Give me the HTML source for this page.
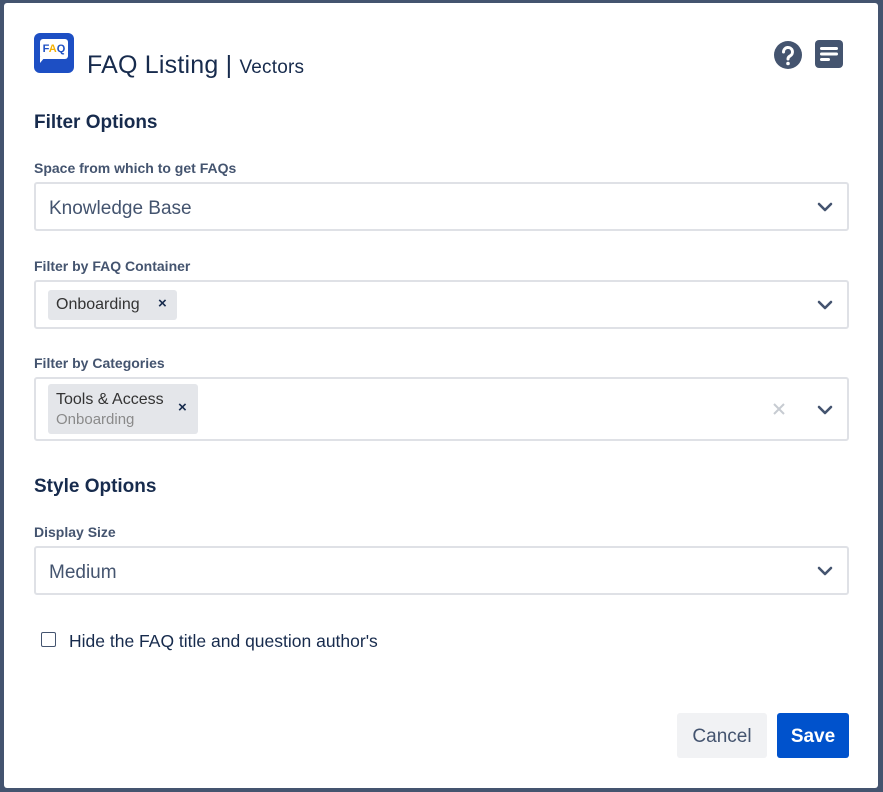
<!DOCTYPE html>
<html><head><style>
*{box-sizing:border-box;margin:0;padding:0}
body{width:883px;height:792px;background:#44546f;font-family:"Liberation Sans",sans-serif;position:relative;overflow:hidden;color:#172b4d}
.m{position:absolute;left:4px;top:3px;width:874px;height:785px;background:#fff;border-radius:3px}
.a{position:absolute}
.lbl{position:absolute;left:34px;font-size:14px;font-weight:bold;color:#44546f}
.h{position:absolute;left:34px;font-size:19px;font-weight:bold;color:#172b4d}
.sel{position:absolute;left:34px;width:815px;border:2px solid #dfe1e6;border-radius:3px;background:#fff}
.v{position:absolute;left:13px;font-size:19px;color:#44546f}
.chev{position:absolute;right:14px;width:16px;height:10px}
.tag{position:absolute;background:#e4e6ea;border-radius:3px;font-size:16px;color:#333}
</style></head><body>
<div class="m"></div>
<div class="a" style="left:34px;top:33px;width:40px;height:40px;background:#1d4fc4;border-radius:6px">
 <div class="a" style="left:6px;top:6px;width:28px;height:20px;background:#fff;border-radius:3px;font-size:11px;font-weight:bold;color:#1d4fc4;text-align:center;line-height:20px">F<span style="color:#f5b000">A</span>Q</div>
 <div class="a" style="left:6px;top:24px;width:0;height:0;border-left:5px solid #fff;border-bottom:6px solid transparent"></div>
</div>
<div class="a" style="left:87px;top:50px;font-size:25px;color:#172b4d;line-height:30px;letter-spacing:0.2px">FAQ Listing <span>|</span> <span style="font-size:19px">Vectors</span></div>
<svg class="a" style="left:773px;top:40px" width="30" height="30" viewBox="0 0 30 30"><circle cx="15" cy="15" r="14" fill="#44546f"/><path d="M10.5 12a4.5 4.5 0 1 1 6.5 4c-1.3.7-2 1.4-2 3" stroke="#fff" stroke-width="3" fill="none" stroke-linecap="round"/><circle cx="15" cy="23.5" r="1.8" fill="#fff"/></svg>
<svg class="a" style="left:815px;top:40px" width="28" height="28" viewBox="0 0 28 28"><rect width="28" height="28" rx="4" fill="#44546f"/><rect x="5" y="7" width="18" height="3" rx="1.5" fill="#fff"/><rect x="5" y="12.5" width="18" height="3" rx="1.5" fill="#fff"/><rect x="5" y="18" width="10" height="3" rx="1.5" fill="#fff"/></svg>

<div class="h" style="top:112px">Filter Options</div>
<div class="lbl" style="top:160px">Space from which to get FAQs</div>
<div class="sel" style="top:182px;height:49px"><div class="v" style="top:14px">Knowledge Base</div>
<svg class="chev" style="top:18px" viewBox="0 0 16 10"><path d="M2 2l6 6 6-6" stroke="#44546f" stroke-width="2.6" fill="none" stroke-linecap="round" stroke-linejoin="round"/></svg></div>

<div class="lbl" style="top:258px">Filter by FAQ Container</div>
<div class="sel" style="top:280px;height:49px">
<div class="tag" style="left:12px;top:8px;width:129px;height:30px;padding:6px 8px">Onboarding<span style="position:absolute;left:110px;top:5px;font-weight:bold;color:#172b4d;font-size:15px">×</span></div>
<svg class="chev" style="top:18px" viewBox="0 0 16 10"><path d="M2 2l6 6 6-6" stroke="#44546f" stroke-width="2.6" fill="none" stroke-linecap="round" stroke-linejoin="round"/></svg></div>

<div class="lbl" style="top:355px">Filter by Categories</div>
<div class="sel" style="top:377px;height:64px">
<div class="tag" style="left:12px;top:5px;width:150px;height:50px;padding:6px 8px;line-height:20px">Tools &amp; Access<br><span style="font-size:15px;color:#8a8a8a;position:relative;top:0px">Onboarding</span><span style="position:absolute;left:130px;top:14px;font-weight:bold;color:#172b4d;font-size:15px">×</span></div>
<svg class="a" style="left:737px;top:24px" width="12" height="12" viewBox="0 0 12 12"><path d="M1 1l10 10M11 1L1 11" stroke="#c7cbd2" stroke-width="2"/></svg>
<svg class="chev" style="top:26px" viewBox="0 0 16 10"><path d="M2 2l6 6 6-6" stroke="#44546f" stroke-width="2.6" fill="none" stroke-linecap="round" stroke-linejoin="round"/></svg></div>

<div class="h" style="top:476px">Style Options</div>
<div class="lbl" style="top:524px">Display Size</div>
<div class="sel" style="top:546px;height:49px"><div class="v" style="top:14px">Medium</div>
<svg class="chev" style="top:18px" viewBox="0 0 16 10"><path d="M2 2l6 6 6-6" stroke="#44546f" stroke-width="2.6" fill="none" stroke-linecap="round" stroke-linejoin="round"/></svg></div>

<div class="a" style="left:41px;top:632px;width:15px;height:15px;border:1.5px solid #44546f;border-radius:2px"></div>
<div class="a" style="left:69px;top:631px;font-size:17.5px;color:#172b4d">Hide the FAQ title and question author's</div>

<div class="a" style="left:677px;top:713px;width:90px;height:45px;background:#f1f2f4;border-radius:3px;font-size:19px;color:#44546f;text-align:center;line-height:47px">Cancel</div>
<div class="a" style="left:777px;top:713px;width:72px;height:45px;background:#0052cc;border-radius:3px;font-size:19px;font-weight:bold;color:#fff;text-align:center;line-height:47px">Save</div>
</body></html>
